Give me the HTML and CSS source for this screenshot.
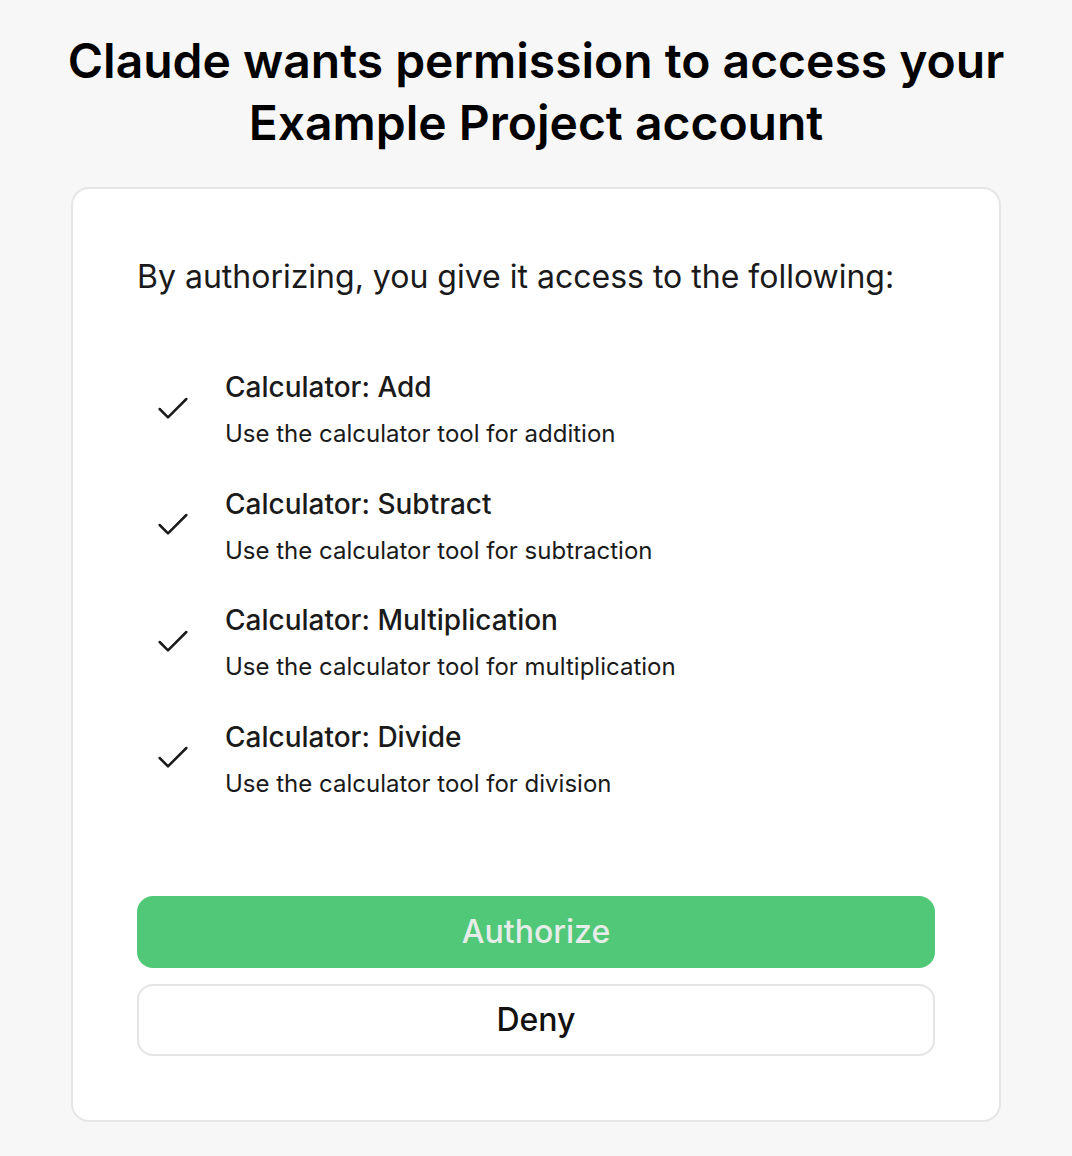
FILE: index.html
```html
<!DOCTYPE html>
<html lang="en">
<head>
    <meta charset="UTF-8">
    <meta name="viewport" content="width=device-width, initial-scale=1.0">
    <title>Authorize Claude</title>
    <link rel="stylesheet" href="styles.css">
</head>
<body>
    <h1 class="title">Claude wants permission to access your Example Project account</h1>

    <div class="card">
        <p class="intro">By authorizing, you give it access to the following:</p>

        <ul class="scopes">
            <li class="scope">
                <svg class="check" viewBox="0 0 24 24"><path d="M20 6 9 17l-5-5"/></svg>
                <div>
                    <div class="scope-name">Calculator: Add</div>
                    <div class="scope-desc">Use the calculator tool for addition</div>
                </div>
            </li>
            <li class="scope">
                <svg class="check" viewBox="0 0 24 24"><path d="M20 6 9 17l-5-5"/></svg>
                <div>
                    <div class="scope-name">Calculator: Subtract</div>
                    <div class="scope-desc">Use the calculator tool for subtraction</div>
                </div>
            </li>
            <li class="scope">
                <svg class="check" viewBox="0 0 24 24"><path d="M20 6 9 17l-5-5"/></svg>
                <div>
                    <div class="scope-name">Calculator: Multiplication</div>
                    <div class="scope-desc">Use the calculator tool for multiplication</div>
                </div>
            </li>
            <li class="scope">
                <svg class="check" viewBox="0 0 24 24"><path d="M20 6 9 17l-5-5"/></svg>
                <div>
                    <div class="scope-name">Calculator: Divide</div>
                    <div class="scope-desc">Use the calculator tool for division</div>
                </div>
            </li>
        </ul>

        <div class="actions">
            <button class="btn btn-primary">Authorize</button>
            <button class="btn btn-secondary">Deny</button>
        </div>
    </div>
</body>
</html>
```

FILE: styles.css
```css
body {
    font-family: Inter, "Noto Sans", sans-serif;
    margin: 0;
    padding: 30px 0 34px;
    background-color: #f7f7f7;
    color: #1a1a1a;
}
.title {
    max-width: 960px;
    margin: 0 auto 33px;
    font-size: 48px;
    line-height: 62px;
    font-weight: 600;
    text-align: center;
    color: #000;
}
.card {
    width: 930px;
    box-sizing: border-box;
    margin: 0 auto;
    padding: 66px 64px 64px;
    background: white;
    border: 2px solid #e6e6e6;
    border-radius: 18px;
}
.intro {
    margin: 0 0 68px;
    font-size: 32px;
    line-height: 44px;
}
.scopes {
    list-style: none;
    margin: 0 0 96px;
    padding: 0;
    display: flex;
    flex-direction: column;
    gap: 33.5px;
}
.scope {
    display: flex;
    align-items: center;
    gap: 32px;
    padding-left: 16px;
}
.check {
    width: 40px;
    height: 40px;
    flex-shrink: 0;
    fill: none;
    stroke: #1a1a1a;
    stroke-width: 1.5;
    stroke-linecap: round;
    stroke-linejoin: round;
}
.scope-name {
    font-size: 28px;
    line-height: 40px;
    font-weight: 500;
    margin-bottom: 11px;
}
.scope-desc {
    font-size: 24px;
    line-height: 32px;
}
.actions {
    display: flex;
    flex-direction: column;
    gap: 16px;
}
.btn {
    height: 72px;
    border-radius: 16px;
    font-family: inherit;
    font-size: 32px;
    font-weight: 500;
}
.btn-primary {
    background: #50c878;
    border: none;
    color: #e6ece8;
}
.btn-secondary {
    background: white;
    border: 2px solid #e4e4e4;
    color: #111;
}
```
